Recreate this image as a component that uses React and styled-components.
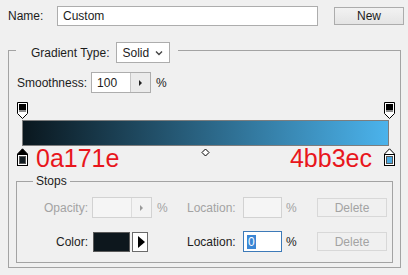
import React from 'react';
import styled, { createGlobalStyle } from 'styled-components';

const GlobalStyle = createGlobalStyle`
  html, body {
    margin: 0;
    padding: 0;
    background: #f0f0f0;
  }
  body {
    font-family: "Liberation Sans", Arial, sans-serif;
    font-size: 12px;
    color: #1c1c1c;
  }
  * {
    box-sizing: border-box;
  }
`;

const Page = styled.div`
  width: 408px;
  height: 275px;
  overflow: hidden;
  padding-top: 6px;
  background: #f0f0f0;
`;

const NameRow = styled.div`
  display: flex;
  align-items: center;
  height: 20px;
  padding-left: 8px;
`;

const NameLabel = styled.span`
  width: 49px;
  line-height: 14px;
`;

const TextBox = styled.div`
  width: ${(p) => p.$width}px;
  height: ${(p) => p.$height || 21}px;
  display: flex;
  align-items: center;
  padding-left: ${(p) => p.$pad || 4}px;
  background: ${(p) => (p.$disabled ? '#f5f5f5' : '#fff')};
  border: 1px solid ${(p) => (p.$focused ? '#3d7ab8' : p.$disabled ? '#d2d2d2' : '#adadad')};
`;

const Button = styled.div`
  width: 70px;
  height: ${(p) => p.$height || 18}px;
  margin-left: ${(p) => p.$offset || 0}px;
  display: flex;
  align-items: center;
  justify-content: center;
  border: 1px solid ${(p) => (p.$disabled ? '#d8d8d8' : '#acacac')};
  background: ${(p) => (p.$disabled ? '#f0f0f0' : 'linear-gradient(#f2f2f2, #e4e4e4)')};
  color: ${(p) => (p.$disabled ? '#a3a3a3' : '#1c1c1c')};
  font-size: 12px;
`;

const Group = styled.fieldset`
  margin: ${(p) => p.$margin};
  padding: ${(p) => p.$padding};
  border: 1px solid #a3a3a3;
  min-width: 0;
`;

const GroupLegend = styled.legend`
  display: flex;
  align-items: center;
  gap: 6px;
  margin-left: ${(p) => p.$offset || 0}px;
  padding: ${(p) => p.$padding};
  line-height: 14px;
`;

const Select = styled.div`
  width: 54px;
  height: 21px;
  display: flex;
  align-items: center;
  justify-content: space-between;
  padding: 0 6px 0 6px;
  background: #fff;
  border: 1px solid #adadad;
`;

const Row = styled.div`
  display: flex;
  align-items: center;
  gap: ${(p) => p.$gap || 0}px;
  margin-top: ${(p) => p.$top || 0}px;
  padding-left: ${(p) => p.$left || 0}px;
`;

const Spinner = styled.div`
  width: 60px;
  height: 21px;
  display: grid;
  grid-template-columns: 1fr 20px;
  background: ${(p) => (p.$disabled ? '#f5f5f5' : '#fff')};
  border: 1px solid ${(p) => (p.$disabled ? '#d2d2d2' : '#adadad')};
`;

const SpinValue = styled.span`
  display: flex;
  align-items: center;
  padding-left: 5px;
`;

const SpinArrow = styled.span`
  display: flex;
  align-items: center;
  justify-content: center;
  border-left: 1px solid ${(p) => (p.$disabled ? '#dcdcdc' : '#c6c6c6')};
  background: ${(p) => (p.$disabled ? '#f3f3f3' : '#ebebeb')};

  &::after {
    content: '';
    border-left: 3px solid ${(p) => (p.$disabled ? '#9a9a9a' : '#222')};
    border-top: 3px solid transparent;
    border-bottom: 3px solid transparent;
  }
`;

const Percent = styled.span`
  color: ${(p) => (p.$disabled ? '#a3a3a3' : '#1c1c1c')};
  margin-left: ${(p) => p.$offset || 0}px;
`;

const Editor = styled.div`
  position: relative;
  margin-top: 9px;
  padding-top: 18px;
`;

const Bar = styled.div`
  height: 26px;
  margin: 0 4px 0 6px;
  border: 1px solid #7d7d7d;
  background: linear-gradient(to right, #0a171e, #4bb3ec);
`;

const StopTrack = styled.div`
  position: absolute;
  left: 6px;
  right: 4px;
  top: ${(p) => p.$top}px;
  height: 18px;
`;

const Marker = styled.svg`
  position: absolute;
  top: 0;
  display: block;
`;

const HexRow = styled.div`
  display: flex;
  justify-content: space-between;
  padding: 0 21px 0 20px;
  font-size: 25px;
  line-height: 25px;
  color: #e8161c;
`;

const StopsGrid = styled.div`
  display: grid;
  grid-template-columns: 71px 69px 30px 56px 43px 31px 70px;
  grid-auto-rows: 21px;
  row-gap: 13px;
  align-items: center;
  padding: 9px 0 10px 0;
`;

const FieldLabel = styled.span`
  text-align: ${(p) => (p.$right ? 'right' : 'left')};
  color: ${(p) => (p.$disabled ? '#a3a3a3' : '#1c1c1c')};
`;

const FieldCell = styled.div`
  display: flex;
  align-items: center;
  padding-left: ${(p) => p.$pad || 0}px;
`;

const Swatch = styled.div`
  width: 37px;
  height: 20px;
  background: ${(p) => p.$color};
  border: 1px solid #5a5a5a;
`;

const ArrowButton = styled.div`
  width: 16px;
  height: 20px;
  margin-left: 2px;
  display: flex;
  align-items: center;
  justify-content: center;
  background: #fff;
  border: 1px solid #6a6a6a;

  &::after {
    content: '';
    margin-left: 2px;
    border-left: 7px solid #000;
    border-top: 6px solid transparent;
    border-bottom: 6px solid transparent;
  }
`;

const Selected = styled.span`
  background: #3b86d4;
  color: #fff;
  padding: 0 1px;
  line-height: 14px;
`;

function TopStop({ at }) {
  return (
    <Marker width="11" height="17" viewBox="0 0 11 17" style={{ left: `calc(${at}% - 5.5px)` }}>
      <path d="M0.5 0.5 H10.5 V11.5 L5.5 16.5 L0.5 11.5 Z" fill="#fff" stroke="#000" />
      <rect x="2" y="2" width="7" height="6" fill="#000" />
      <rect x="2" y="8" width="7" height="2" fill="#8c8c8c" />
    </Marker>
  );
}

function BottomStop({ at, color, active }) {
  return (
    <Marker width="11" height="18" viewBox="0 0 11 18" style={{ left: `calc(${at}% - 5.5px)` }}>
      <path d="M0.5 17.5 V6 L5.5 0.8 L10.5 6 V17.5 Z" fill={active ? '#000' : '#fff'} stroke="#000" />
      <rect x="0.5" y="6.5" width="10" height="11" fill="#fff" stroke="#000" />
      <rect x="2.5" y="8.5" width="6" height="7" fill={color} stroke="#555" />
    </Marker>
  );
}

function Midpoint({ at }) {
  return (
    <Marker width="9" height="9" viewBox="0 0 9 9" style={{ left: `calc(${at}% - 4.5px)` }}>
      <path d="M4.5 1 L8 4.5 L4.5 8 L1 4.5 Z" fill="#fff" stroke="#000" />
    </Marker>
  );
}

function Chevron() {
  return (
    <svg width="8" height="6" viewBox="0 0 8 6">
      <path d="M1 1.5 L4 4.5 L7 1.5" fill="none" stroke="#444" strokeWidth="1.4" />
    </svg>
  );
}

export default function App() {
  return (
    <Page>
      <GlobalStyle />
      <NameRow>
        <NameLabel>Name:</NameLabel>
        <TextBox $width={261} $height={20} $pad={5}>Custom</TextBox>
        <Button $offset={16}>New</Button>
      </NameRow>

      <Group $margin="12px 7px 0 8px" $padding="0 7px 4px 7px">
        <GroupLegend $padding="4px 8px 0 15px">
          Gradient Type:
          <Select>
            Solid
            <Chevron />
          </Select>
        </GroupLegend>

        <Row $top={9} $left={1} $gap={4}>
          <span>Smoothness:</span>
          <Spinner>
            <SpinValue>100</SpinValue>
            <SpinArrow />
          </Spinner>
          <Percent $offset={1}>%</Percent>
        </Row>

        <Editor>
          <StopTrack $top={0}>
            <TopStop at={0} />
            <TopStop at={100} />
          </StopTrack>
          <Bar />
          <HexRow>
            <span>0a171e</span>
            <span>4bb3ec</span>
          </HexRow>
          <StopTrack $top={46}>
            <BottomStop at={0} color="#111b21" active />
            <Midpoint at={50} />
            <BottomStop at={100} color="#4ba9e0" />
          </StopTrack>
        </Editor>

        <Group $margin="3px 0 0 0" $padding="0">
          <GroupLegend $offset={16} $padding="0 3px">Stops</GroupLegend>
          <StopsGrid>
            <FieldLabel $right $disabled>Opacity:</FieldLabel>
            <FieldCell $pad={4}>
              <Spinner $disabled>
                <SpinValue />
                <SpinArrow $disabled />
              </Spinner>
            </FieldCell>
            <Percent $disabled>%</Percent>
            <FieldLabel $disabled>Location:</FieldLabel>
            <FieldCell>
              <TextBox $width={39} $disabled />
            </FieldCell>
            <Percent $disabled>%</Percent>
            <Button $disabled $height={19}>Delete</Button>

            <FieldLabel $right>Color:</FieldLabel>
            <FieldCell $pad={5}>
              <Swatch $color="#0d171d" />
              <ArrowButton />
            </FieldCell>
            <Percent />
            <FieldLabel>Location:</FieldLabel>
            <FieldCell>
              <TextBox $width={39} $focused $pad={3}>
                <Selected>0</Selected>
              </TextBox>
            </FieldCell>
            <Percent>%</Percent>
            <Button $disabled $height={19}>Delete</Button>
          </StopsGrid>
        </Group>
      </Group>
    </Page>
  );
}
